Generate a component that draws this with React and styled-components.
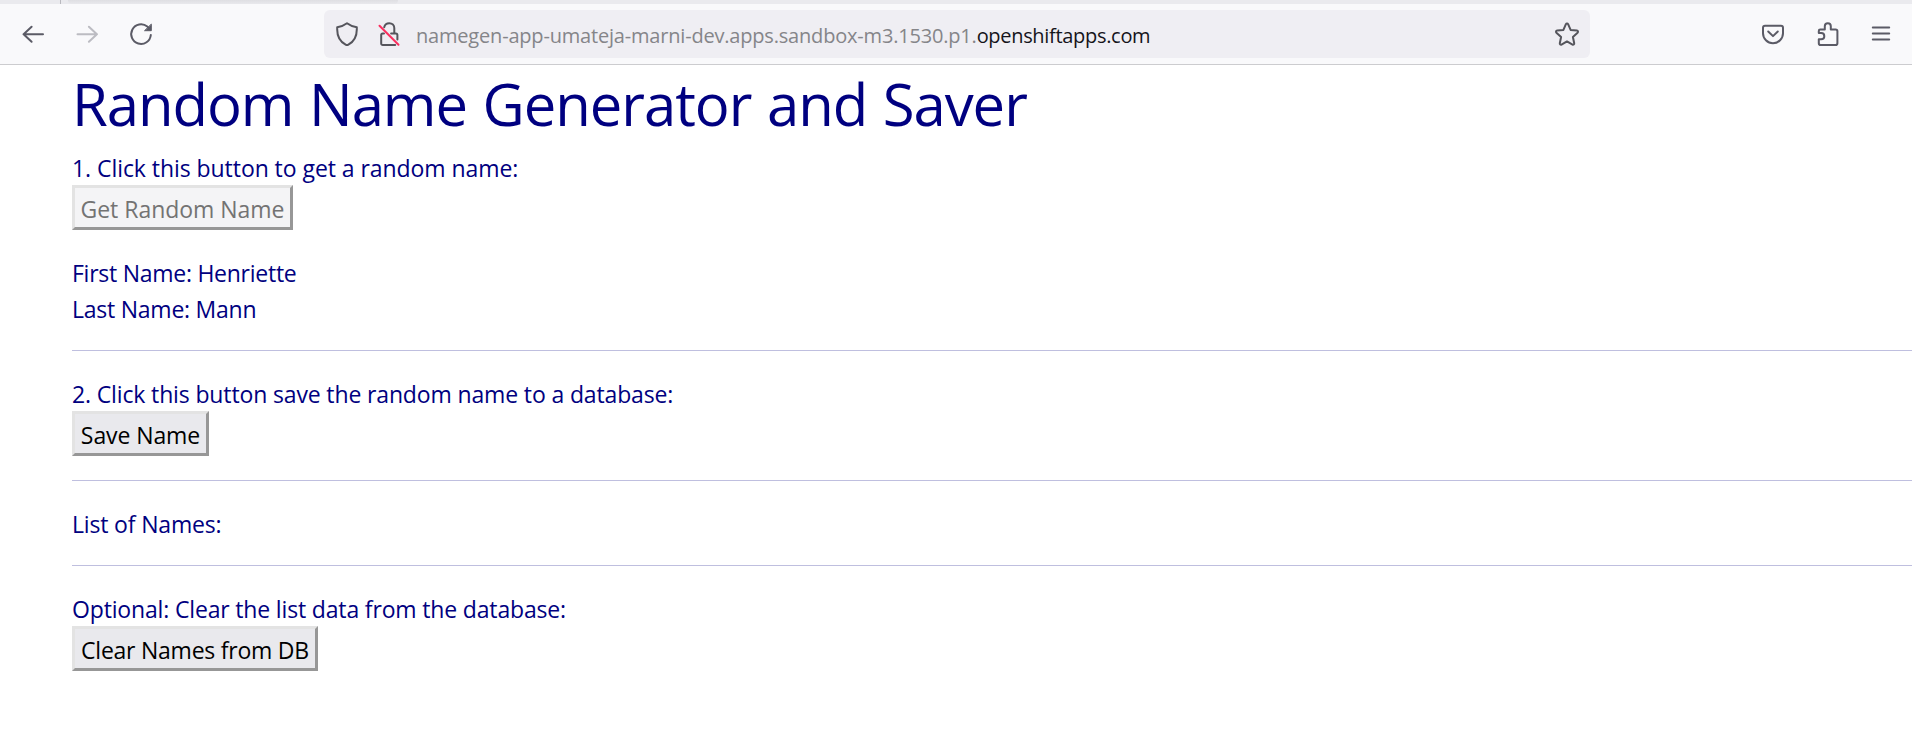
import React from 'react';
import styled, { createGlobalStyle } from 'styled-components';

const GlobalStyle = createGlobalStyle`
  * { box-sizing: border-box; }
  body {
    margin: 0;
    background: #fff;
    font-family: 'Open Sans', 'Noto Sans', sans-serif;
    overflow: hidden;
  }
`;

const Window = styled.div`
  height: 753px;
  overflow: hidden;
`;

const TabStrip = styled.div`
  display: flex;
  height: 4px;
  background: #eaeaee;
`;

const TabGap = styled.div`
  width: 61px;
  border-right: 1px solid #b9b9bf;
`;

const ActiveTab = styled.div`
  width: 330px;
  margin-left: 7px;
  background: linear-gradient(#dedee2, #e8e8ec);
  border-radius: 0 0 6px 6px;
`;

const Toolbar = styled.header`
  display: flex;
  align-items: center;
  height: 61px;
  padding: 0 15px 0 17px;
  background: #f9f9fb;
  border-bottom: 1px solid #cccccf;
`;

const IconGroup = styled.div`
  display: flex;
  gap: 22px;
`;

const AddressBar = styled.div`
  display: flex;
  align-items: center;
  flex: 1;
  height: 48px;
  margin: 0 167px;
  padding: 0 7px;
  gap: 10px;
  background: #efeef3;
  border-radius: 6px;
`;

const Url = styled.div`
  flex: 1;
  padding: 3px 0 0 1px;
  font-size: 20px;
  line-height: 45px;
  letter-spacing: -0.19px;
  white-space: nowrap;
  color: #858589;
`;

const Domain = styled.span`
  color: #15141a;
  letter-spacing: -0.31px;
`;

const Icon = styled.svg`
  display: block;
  flex: none;
  width: 32px;
  height: 32px;
  fill: none;
  stroke: ${(p) => p.$color || '#5b5b66'};
  stroke-width: 2;
  stroke-linecap: round;
  stroke-linejoin: round;
`;

const Page = styled.main`
  padding-left: 72px;
`;

const Title = styled.h1`
  margin: 0 0 9px;
  padding-top: 3px;
  font-size: 58px;
  font-weight: 400;
  line-height: 72px;
  letter-spacing: -1.03px;
  word-spacing: 1.5px;
  white-space: nowrap;
  color: #000080;
`;

const Line = styled.div`
  padding-top: 2px;
  font-size: 23px;
  line-height: 34px;
  letter-spacing: ${(p) => p.$tracking}px;
  white-space: nowrap;
  color: #000080;
`;

const Result = styled.section`
  margin-top: 24px;
`;

const Button = styled.button`
  display: block;
  width: ${(p) => p.$width}px;
  height: 45px;
  margin: 0;
  padding: 3px 0 0;
  border: 3px solid;
  border-color: #e3e3e3 #979797 #979797 #e3e3e3;
  background: #e9e9ed;
  color: #000;
  font-family: inherit;
  font-size: 23px;
  line-height: 36px;
  letter-spacing: ${(p) => p.$tracking}px;
  white-space: nowrap;

  &:disabled {
    background: #f4f4f6;
    color: #737373;
  }
`;

const Divider = styled.hr`
  height: 1px;
  margin: 24px 0;
  border: 0;
  background: #bfbfdf;
`;

const BackIcon = () => (
  <Icon viewBox="0 0 32 32">
    <path d="M6.5 16.3H26M14.6 8.8L6.6 16.3l8 7.5" />
  </Icon>
);

const ForwardIcon = () => (
  <Icon viewBox="0 0 32 32" $color="#bcbcc2">
    <path d="M6.5 16.3H26M17.9 8.8l8 7.5-8 7.5" />
  </Icon>
);

const ReloadIcon = () => (
  <Icon viewBox="0 0 32 32">
    <path d="M25.8 17A9.8 9.8 0 1 1 22.3 8.6l2 1.9" />
    <path d="M26.3 6.5v6.2h-6.4z" fill="#5b5b66" strokeWidth="1" />
  </Icon>
);

const ShieldIcon = () => (
  <Icon viewBox="0 0 32 32" $color="#55555c">
    <path d="M16 5.2c3 2.3 6.2 3.4 9.8 4v2.3c0 7-3.4 12.4-8.4 15.2a2.8 2.8 0 0 1-2.8 0C9.6 23.9 6.2 18.5 6.2 11.5V9.2c3.6-.6 6.8-1.7 9.8-4z" />
  </Icon>
);

const LockIcon = () => (
  <Icon viewBox="0 0 32 32" $color="#55555c">
    <path d="M11.2 9.2C11.7 6.9 13.700 5.2 16.3 5.2c2.8 0 5 2 5 4.9v5.4h-3.2M21.3 15.5h1.6a1.5 1.5 0 0 1 1.5 1.5v4.5M11 15.5H9.7a1.5 1.5 0 0 0-1.5 1.5v8.600a1.5 1.5 0 0 0 1.5 1.5h12.5" />
    <path d="M6.5 7.7l19 19" stroke="#fb2f5f" />
  </Icon>
);

const StarIcon = () => (
  <Icon viewBox="0 0 32 32" $color="#55555c">
    <path d="M14.9 6.2a1.25 1.25 0 0 1 2.2 0l2.5 5.7 6.3.7c1.1.1 1.5 1.4.7 2.1l-4.7 4.3 1.3 6.3c.2 1.1-.8 1.8-1.7 1.3L16 23.4l-5.5 3.2c-.9.5-1.9-.2-1.7-1.3l1.3-6.3-4.7-4.3c-.8-.7-.4-2 .7-2.1l6.3-.7z" />
  </Icon>
);

const PocketIcon = () => (
  <Icon viewBox="0 0 32 32">
    <path d="M8 7.8h16a2 2 0 0 1 2 2v5.4a10 10 0 0 1-20 0V9.8a2 2 0 0 1 2-2z" />
    <path d="M11.2 13.5l4.8 4.6 4.8-4.6" />
  </Icon>
);

const ExtensionsIcon = () => (
  <Icon viewBox="0 0 32 32">
    <path d="M9.2 11.5h4.6V8.3a3 3 0 0 1 6 0v3.2h4.8a1.8 1.8 0 0 1 1.8 1.8v12a1.8 1.8 0 0 1-1.8 1.8H9.6a1.8 1.8 0 0 1-1.8-1.8v-4h2.4a3.1 3.1 0 0 0 0-6.2H7.8v-2.2a1.4 1.4 0 0 1 1.4-1.4z" />
  </Icon>
);

const MenuIcon = () => (
  <Icon viewBox="0 0 32 32">
    <path d="M7.8 9.5h16.4M7.8 15.5h16.4M7.8 21.5h16.4" />
  </Icon>
);

export default function App() {
  return (
    <Window>
      <GlobalStyle />
      <TabStrip>
        <TabGap />
        <ActiveTab />
      </TabStrip>
      <Toolbar>
        <IconGroup>
          <BackIcon />
          <ForwardIcon />
          <ReloadIcon />
        </IconGroup>
        <AddressBar>
          <ShieldIcon />
          <LockIcon />
          <Url>
            namegen-app-umateja-marni-dev.apps.sandbox-m3.1530.p1.
            <Domain>openshiftapps.com</Domain>
          </Url>
          <StarIcon />
        </AddressBar>
        <IconGroup>
          <PocketIcon />
          <ExtensionsIcon />
          <MenuIcon />
        </IconGroup>
      </Toolbar>
      <Page>
        <Title>Random Name Generator and Saver</Title>
        <Line $tracking={-0.06}>1. Click this button to get a random name:</Line>
        <Button $width={221} $tracking={-0.03} disabled>Get Random Name</Button>
        <Result>
          <Line $tracking={-0.26}>First Name: Henriette</Line>
          <Line $tracking={-0.24}>Last Name: Mann</Line>
        </Result>
        <Divider />
        <Line $tracking={-0.14}>2. Click this button save the random name to a database:</Line>
        <Button $width={137} $tracking={-0.09}>Save Name</Button>
        <Divider />
        <Line $tracking={-0.17}>List of Names:</Line>
        <Divider />
        <Line $tracking={-0.16}>Optional: Clear the list data from the database:</Line>
        <Button $width={246} $tracking={-0.24}>Clear Names from DB</Button>
      </Page>
    </Window>
  );
}
